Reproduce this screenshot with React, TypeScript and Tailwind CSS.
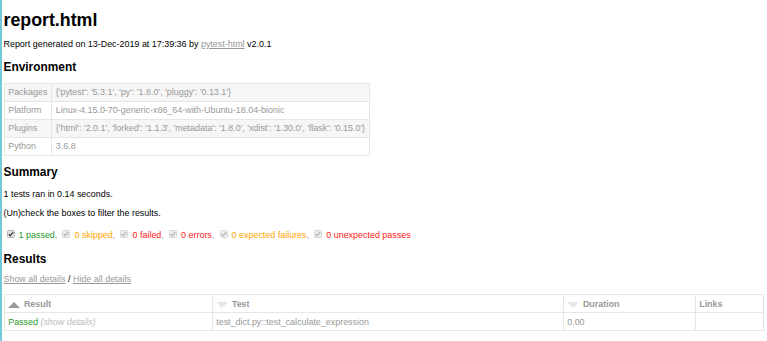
import React from 'react'

const font = { fontFamily: '"Liberation Sans", Arial, Helvetica, sans-serif' }

const env: [string, string][] = [
  ['Packages', "{'pytest': '5.3.1', 'py': '1.8.0', 'pluggy': '0.13.1'}"],
  ['Platform', 'Linux-4.15.0-70-generic-x86_64-with-Ubuntu-18.04-bionic'],
  ['Plugins', "{'html': '2.0.1', 'forked': '1.1.3', 'metadata': '1.8.0', 'xdist': '1.30.0', 'flask': '0.15.0'}"],
  ['Python', '3.6.8'],
]

const filters = [
  { label: '1 passed', color: 'text-[#1f9a2a]', active: true },
  { label: '0 skipped', color: 'text-[#ffa500]', active: false },
  { label: '0 failed', color: 'text-[#ff2020]', active: false },
  { label: '0 errors', color: 'text-[#ff2020]', active: false },
  { label: '0 expected failures', color: 'text-[#ffa500]', active: false },
  { label: '0 unexpected passes', color: 'text-[#ff2020]', active: false },
]

function Checkbox({ active }: { active: boolean }) {
  return (
    <svg width="8" height="8" viewBox="0 0 8 8" className="mb-[3px] shrink-0">
      <rect x="0.5" y="0.5" width="7" height="7" rx="1" fill={active ? '#e2e2e2' : '#ededed'} stroke={active ? '#b5b5b5' : '#d6d6d6'} />
      <path d="M1.8 4.2 L3.3 5.7 L6.2 2.2" fill="none" stroke={active ? '#444' : '#b8b8b8'} strokeWidth="1.3" />
    </svg>
  )
}

function SortIcon({ up }: { up: boolean }) {
  return (
    <svg width="12" height="6" viewBox="0 0 12 6" className="mt-[3.7px] mr-[3.7px] shrink-0">
      {up ? <polygon points="0,6 12,6 6,0" fill="#999" /> : <polygon points="0,0 12,0 6,6" fill="#e6e6e6" />}
    </svg>
  )
}

export default function App() {
  return (
    <div style={font} className="min-h-[341px] border-l-2 border-[#74c8d9] pl-[1.5px] pr-[3.5px] text-[8.93px] text-[#999] bg-white">
      <div className="flex flex-col">
        <h1 className="mt-[10px] text-[17.8px] leading-[20px] font-bold text-black">report.html</h1>
        <p className="mt-[9px] leading-[10px] text-black">
          Report generated on 13-Dec-2019 at 17:39:36 by <a className="text-[#999] underline">pytest-html</a> v2.0.1
        </p>

        <h2 className="mt-[10.6px] text-[11.9px] leading-[14px] font-bold text-black">Environment</h2>
        <table className="mt-[9.4px] self-start border-collapse">
          <tbody>
            {env.map(([k, v], i) => (
              <tr key={k} className={i % 2 === 0 ? 'bg-[#f6f6f6]' : ''}>
                <td className="border border-[#e6e6e6] px-[3.7px] py-[3.5px] leading-[10px] whitespace-nowrap">{k}</td>
                <td className="border border-[#e6e6e6] px-[3.7px] py-[3.5px] leading-[10px] whitespace-nowrap">{v}</td>
              </tr>
            ))}
          </tbody>
        </table>

        <h2 className="mt-[9px] text-[11.9px] leading-[14px] font-bold text-black">Summary</h2>
        <p className="mt-[10px] leading-[10px] text-black">1 tests ran in 0.14 seconds.</p>
        <p className="mt-[9px] leading-[10px] text-black">(Un)check the boxes to filter the results.</p>

        <div className="mt-[12px] flex items-center leading-[10px] pl-[3px]">
          {filters.map((f, i) => (
            <div key={f.label} className={`flex items-center ${i > 0 ? 'ml-[5.2px]' : ''}`}>
              <Checkbox active={f.active} />
              <span className={`ml-[4.1px] ${f.color}`}>{f.label}</span>
              {i < filters.length - 1 && <span>,</span>}
            </div>
          ))}
        </div>

        <h2 className="mt-[11px] text-[11.9px] leading-[14px] font-bold text-black">Results</h2>
        <p className="mt-[8px] leading-[10px] text-black">
          <a className="text-[#999] underline">Show all details</a> / <a className="text-[#999] underline">Hide all details</a>
        </p>

        <table className="mt-[10.3px] w-full table-fixed border-collapse border border-[#e6e6e6]">
          <colgroup>
            <col className="w-[208px]" />
            <col className="w-[351px]" />
            <col className="w-[132px]" />
            <col />
          </colgroup>
          <thead>
            <tr>
              <th className="border border-[#e6e6e6] px-[3.7px] py-[3.5px] leading-[10px] text-left font-bold">
                <div className="flex"><SortIcon up />Result</div>
              </th>
              <th className="border border-[#e6e6e6] px-[3.7px] py-[3.5px] leading-[10px] text-left font-bold">
                <div className="flex"><SortIcon up={false} />Test</div>
              </th>
              <th className="border border-[#e6e6e6] px-[3.7px] py-[3.5px] leading-[10px] text-left font-bold">
                <div className="flex"><SortIcon up={false} />Duration</div>
              </th>
              <th className="border border-[#e6e6e6] px-[3.7px] py-[3.5px] leading-[10px] text-left font-bold">Links</th>
            </tr>
          </thead>
          <tbody>
            <tr>
              <td className="border border-[#e6e6e6] px-[3.7px] py-[3.5px] leading-[10px]">
                <span className="text-[#1f9a2a]">Passed</span> <span className="italic text-[#bbb]">(show details)</span>
              </td>
              <td className="border border-[#e6e6e6] px-[3.7px] py-[3.5px] leading-[10px]">test_dict.py::test_calculate_expression</td>
              <td className="border border-[#e6e6e6] px-[3.7px] py-[3.5px] leading-[10px]">0.00</td>
              <td className="border border-[#e6e6e6] px-[3.7px] py-[3.5px] leading-[10px]"></td>
            </tr>
          </tbody>
        </table>
      </div>
    </div>
  )
}
